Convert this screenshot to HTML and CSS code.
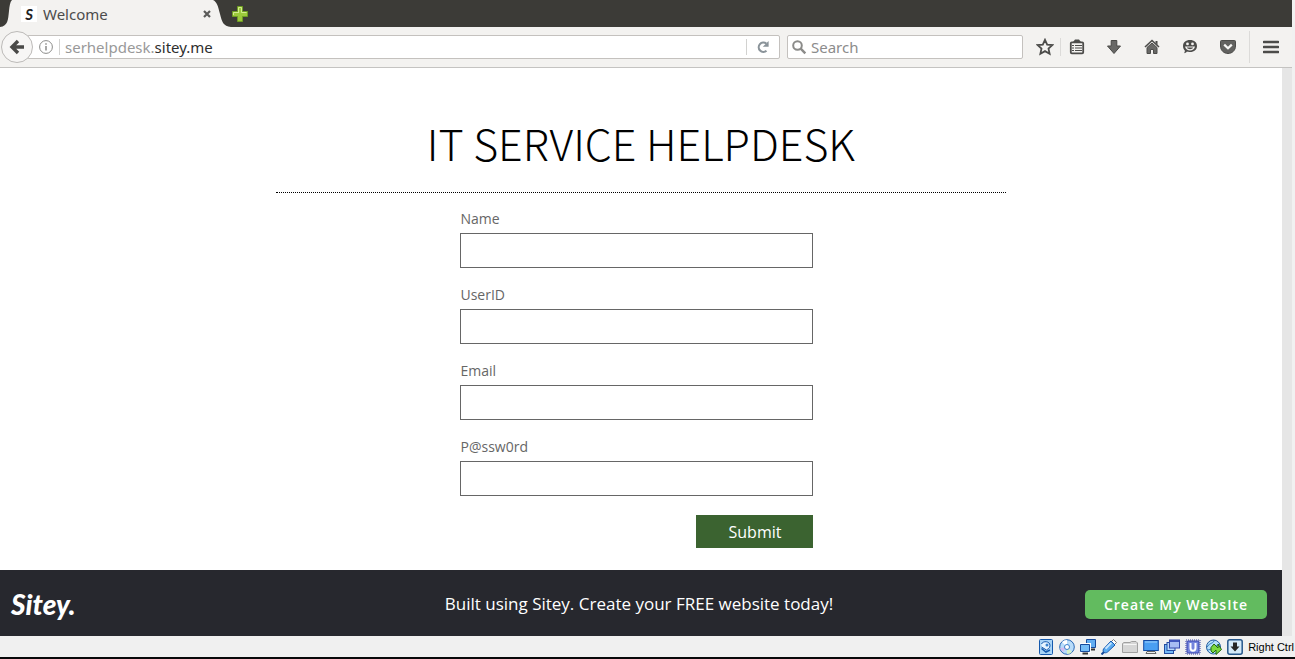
FILE: index.html
```html
<!DOCTYPE html>
<html lang="en">
<head>
<meta charset="utf-8">
<title>Welcome</title>
<link rel="stylesheet" href="styles.css">
</head>
<body>
<div class="window">
  <div class="tabs">
    <svg class="curve" width="12" height="27" viewBox="0 0 12 27"><path d="M0 27C8 26 8 20 9 11C9.500 6 10 2 12 0V27Z" fill="#f3f2f0"/></svg>
    <div class="tab">
      <span class="favicon">S</span>
      <span class="tab-title">Welcome</span>
      <button class="plain" aria-label="Close tab"><svg width="10" height="10" viewBox="0 0 10 10"><path d="M2 2L8 8M8 2L2 8" stroke="#5b5b59" stroke-width="2.200"/></svg></button>
    </div>
    <svg class="curve" width="18" height="27" viewBox="0 0 18 27"><path d="M0 0C4 2 5 6 7 14C9 22 10 26 18 27H0Z" fill="#f3f2f0"/></svg>
    <button class="plain new-tab" aria-label="New tab"><svg width="16" height="16" viewBox="0 0 16 16"><path d="M5.500 .5H10.500V5.500H15.500V10.500H10.500V15.500H5.500V10.500H.5V5.500H5.500Z" fill="#9cc93c" stroke="#6f9d22"/><path d="M6.500 7V1.500H9.500V6.500H14.500M1.500 9V6.500H6.500" fill="none" stroke="#d3ec8f"/></svg></button>
  </div>

  <div class="toolbar">
    <button class="plain back" aria-label="Back"><svg width="16" height="16" viewBox="0 0 16 16"><path d="M9 2L3 8L9 14M3.500 8H15" fill="none" stroke="#4a4a48" stroke-width="3.400"/></svg></button>
    <div class="address">
      <svg width="14" height="14" viewBox="0 0 14 14"><circle cx="7" cy="7" r="6.400" fill="none" stroke="#8c8c8a"/><path d="M7 6V10.500M7 3.200V4.800" stroke="#8c8c8a" stroke-width="1.500"/></svg>
      <span class="rule"></span>
      <span class="url">serhelpdesk.<b>sitey.me</b></span>
      <span class="rule"></span>
      <button class="plain reload" aria-label="Reload"><svg width="14" height="14" viewBox="0 0 14 14"><path d="M10.500 10.800A4.700 4.700 0 1 1 10.300 3.500" fill="none" stroke="#8a9399" stroke-width="2.100"/><path d="M12.600 1V6.800H6.800Z" fill="#8a9399"/></svg></button>
    </div>
    <label class="search">
      <svg width="15" height="15" viewBox="0 0 15 15"><circle cx="5.500" cy="5.500" r="4.300" fill="none" stroke="#8b8b89" stroke-width="2"/><path d="M8.700 8.700L13.300 13.300" stroke="#8b8b89" stroke-width="2.400"/></svg>
      <input type="text" placeholder="Search" aria-label="Search">
    </label>
    <div class="tools">
      <button class="plain" aria-label="Bookmark"><svg width="18" height="18" viewBox="0 0 18 18"><path d="M9 1.800L11.200 6.600L16.300 7.100L12.500 10.600L13.600 15.800L9 13.100L4.400 15.800L5.500 10.600L1.700 7.100L6.800 6.600Z" fill="none" stroke="#4c4c4a" stroke-width="1.800"/></svg></button>
      <button class="plain" aria-label="Bookmarks list"><svg width="16" height="16" viewBox="0 0 16 16"><path d="M4 3L6 .5H10L12 3Z" fill="#4c4c4a"/><rect x="1.800" y="3.300" width="12.400" height="11" rx="1" fill="none" stroke="#4c4c4a" stroke-width="1.800"/><path d="M3 6.500H5M6 6.500H13M3 9H5M6 9H13M3 11.500H5M6 11.500H13" stroke="#4c4c4a" stroke-width="1.200"/></svg></button>
      <button class="plain" aria-label="Downloads"><svg width="16" height="16" viewBox="0 0 16 16"><path d="M5.200 1.500H10.800V7H14.500L8 14.500L1.500 7H5.200Z" fill="#686866" stroke="#484846"/></svg></button>
      <button class="plain" aria-label="Home"><svg width="16" height="16" viewBox="0 0 16 16"><path d="M1 8L8 1.500L15 8" fill="none" stroke="#4c4c4a" stroke-width="1.600"/><path d="M11.500 2H13.500V6L11.500 4Z" fill="#4c4c4a"/><path d="M3 8.500L8 4L13 8.500V14.500H9.500V10.500H6.500V14.500H3Z" fill="#686866" stroke="#4c4c4a"/></svg></button>
      <button class="plain" aria-label="Hello chat"><svg width="16" height="16" viewBox="0 0 16 16"><path d="M8 1C12.300 1 15 3.500 15 7S12.300 13 8 13C6.500 13 5.800 12.900 5 12.600C4.200 13.600 3.200 14.200 2 14.300C2.700 13.200 2.900 12.400 2.800 11.400C1.600 10.200 1 8.700 1 7C1 3.500 3.700 1 8 1Z" fill="#4c4c4a"/><circle cx="5.500" cy="4.900" r="1.400" fill="#f3f2f0"/><circle cx="10.500" cy="4.900" r="1.400" fill="#f3f2f0"/><path d="M3 7.500H13C12.500 10.200 10.300 11.500 8 11.500S3.500 10.200 3 7.500Z" fill="#f3f2f0"/><path d="M4.800 8.600H11.200C10.700 9.900 9.200 10.300 8 10.300S5.300 9.900 4.800 8.600Z" fill="#4c4c4a"/></svg></button>
      <button class="plain" aria-label="Pocket"><svg width="16" height="16" viewBox="0 0 16 16"><path d="M1.500 1.500H14.500Q15.500 1.500 15.500 2.500V7C15.500 11.500 12 14.500 8 14.500S.5 11.500 .5 7V2.500Q.5 1.500 1.500 1.500Z" fill="#626260" stroke="#4c4c4a"/><path d="M4.200 5.600L8 9.300L11.800 5.600" fill="none" stroke="#f7f7f5" stroke-width="2.200"/></svg></button>
      <button class="plain" aria-label="Menu"><svg width="16" height="14" viewBox="0 0 16 14"><path d="M1 2H15M1 7H15M1 12H15" stroke="#4c4c4a" stroke-width="2.600" stroke-linecap="round"/></svg></button>
    </div>
  </div>

  <div class="viewport">
    <div class="page">
      <main class="content">
        <h1>IT SERVICE HELPDESK</h1>
        <form class="form">
          <label for="name">Name</label>
          <input id="name" type="text">
          <label for="userid">UserID</label>
          <input id="userid" type="text">
          <label for="email">Email</label>
          <input id="email" type="text">
          <label for="pass">P@ssw0rd</label>
          <input id="pass" type="text">
          <button type="button" class="submit">Submit</button>
        </form>
      </main>
      <footer class="promo">
        <a class="logo" href="#">Sitey.</a>
        <p>Built using Sitey. Create your FREE website today!</p>
        <a class="create" href="#">Create My WebsIte</a>
      </footer>
    </div>
    <div class="scroll"></div>
  </div>

  <div class="status">
    <svg width="16" height="16" viewBox="0 0 16 16"><rect x="1.500" y=".5" width="13" height="15" rx="1" fill="#a9d4f7" stroke="#1458ac"/><path d="M3.500 5C5 1.500 12 2 12 6.500C12 9.500 9.500 10 8.500 11L3.500 8" fill="#e8f5ff" stroke="#1458ac"/><circle cx="9" cy="6" r="1.500" fill="#3a83cf"/><path d="M3.500 9.500L8 13L12 11" fill="none" stroke="#1458ac" stroke-width="1.500"/></svg>
    <svg width="16" height="16" viewBox="0 0 16 16"><circle cx="8" cy="8" r="7.300" fill="#b8dcfa" stroke="#2867b5"/><path d="M8 8L3 3A7 7 0 0 1 8 1Z" fill="#fff"/><path d="M8 8L13 13A7 7 0 0 1 8 15Z" fill="#d8f3c8"/><path d="M8 8L1 9A7 7 0 0 0 4 13Z" fill="#d2bdf0"/><circle cx="8" cy="8" r="2.500" fill="#fff" stroke="#3c80cb"/></svg>
    <svg width="16" height="16" viewBox="0 0 16 16"><path d="M6.500 .5H15.500V8.500H6.500Z" fill="#62adf1" stroke="#174a9b"/><path d="M10 10.500H15" stroke="#333" stroke-width="2"/><path d="M.5 5.500H9.500V12.500H.5Z" fill="#75bcf6" stroke="#fff" stroke-width="3"/><path d="M.5 5.500H9.500V12.500H.5Z" fill="#75bcf6" stroke="#174a9b"/><path d="M2.500 14.500H8" stroke="#333" stroke-width="2"/></svg>
    <svg width="16" height="16" viewBox="0 0 16 16"><path d="M10.500 2.500L12.500 .5L15.500 3.500L13.500 5.500Z" fill="#fff" stroke="#777"/><path d="M2.500 10L10 2L14 6L6.500 13C4 15 1 13 2.500 10Z" fill="#5aaaf0" stroke="#185ab0"/><path d="M4.500 9.800L10.300 3.900" stroke="#c3e4ff" stroke-width="2"/><path d="M3 13L.5 15.500" stroke="#174a9b" stroke-width="2"/></svg>
    <svg width="16" height="16" viewBox="0 0 16 16"><path d="M.5 13.500V4.500L2 3.500H8L9.500 2.500H14L15.500 4V13.500Z" fill="#d6d6d6" stroke="#a0a0a0"/><path d="M1.500 5.500H14.500" stroke="#f6f6f6"/></svg>
    <svg width="16" height="16" viewBox="0 0 16 16"><rect x=".7" y="1.500" width="14.600" height="10" fill="#4a9ff2" stroke="#124aa3"/><path d="M2 3H14" stroke="#9dd0fb"/><path d="M3 14.500L4 12.500H12L13 14.500Z" fill="#eee" stroke="#666"/></svg>
    <svg width="16" height="16" viewBox="0 0 16 16"><rect x=".5" y="5.500" width="9" height="9" fill="#74b9f6" stroke="#234ba0"/><rect x="3" y="3.500" width="8" height="8" fill="#b9d9fa" stroke="#234ba0"/><rect x="5.500" y="1" width="10" height="8" fill="#a7bdf3" stroke="#3449ad"/><path d="M6 2H15" stroke="#4057bd" stroke-width="2"/></svg>
    <svg width="16" height="16" viewBox="0 0 16 16"><rect x="1" y="1" width="14" height="14" fill="none" stroke="#3541a6" stroke-width="1" stroke-dasharray="1 1"/><rect x="2" y="2" width="12" height="12" rx="1" fill="#7585dd" stroke="#3945ae"/><path d="M5.500 4V9C5.500 12.500 10.500 12.500 10.500 9V4" fill="none" stroke="#fff" stroke-width="2"/></svg>
    <svg width="16" height="16" viewBox="0 0 16 16"><circle cx="7.500" cy="8" r="7" fill="#b5e0fa" stroke="#255c9d"/><path d="M1 8C4 3 8 5 8 1M1 11C5 11 8 8 14 5" fill="none" stroke="#2b72b8"/><path d="M5 8.500L8 5L12 9V5L15.500 10.500L10 15.500V11L7 14L5 12Z" fill="#7bd83e" stroke="#23680f"/></svg>
    <svg width="16" height="16" viewBox="0 0 16 16"><rect x=".8" y=".8" width="14.400" height="14.400" rx="2" fill="#d5eafa" stroke="#26578c" stroke-width="1.500"/><path d="M6 3.500H10V7.500H12.500L8 12.500L3.500 7.500H6Z" fill="#252525"/></svg>
    <span class="host-key">Right Ctrl</span>
  </div>
</div>
</body>
</html>
```
FILE: styles.css
```css
* { box-sizing: border-box; }
body { margin: 0; background: #f1f1f1; font-family: "Open Sans", sans-serif; }
.window { display: flex; flex-direction: column; min-height: 100vh; border-bottom: 2px solid #08080a; }
.plain { display: flex; align-items: center; justify-content: center; padding: 0; border: 0; background: none; }

.tabs { display: flex; height: 27px; margin-right: 3px; background: #3c3b37; }
.tab { display: flex; align-items: center; width: 201px; padding: 0 1px 0 9px; background: #f3f2f0; font: 15px/20px "Noto Sans", sans-serif; color: #4c4c4c; }
.tab-title { flex: 1; padding-left: 6px; }
.favicon { width: 16px; height: 16px; background: #fff; color: #222; font: italic 700 15px/16px Lato, sans-serif; text-align: center; }
.new-tab { margin-left: 1px; }

.toolbar { display: flex; align-items: center; height: 41px; margin-right: 3px; padding-left: 1px; background: #f3f2f0; border-bottom: 1px solid #c4c3c1; }
.back { position: relative; width: 32px; height: 32px; border: 1px solid #bcbab8; border-radius: 50%; background: #f7f6f5; }
.address, .search { display: flex; align-items: center; height: 24px; border: 1px solid #c4c1be; border-radius: 2px; background: #fff; font: 15px/20px "Noto Sans", sans-serif; }
.address { flex: 1; margin-left: -6px; padding-left: 11px; }
.rule { width: 1px; height: 16px; margin-left: 6px; background: #d2d2d0; }
.url { flex: 1; padding-left: 5px; color: #999; }
.url b { font-weight: 400; color: #2e2e2e; }
.reload { width: 32px; }
.search { width: 236px; margin-left: 7px; padding-left: 4px; gap: 4px; }
.search input { flex: 1; min-width: 0; padding: 0; border: 0; outline: 0; background: none; font: inherit; }
.search input::placeholder { color: #8c8c8c; opacity: 1; }
.tools { display: flex; align-items: center; width: 269px; padding-left: 11px; }
.tools button { width: 38px; height: 32px; }
.tools button:first-child { width: 27px; height: 18px; padding-right: 4px; border-right: 1px solid #dcdbd9; }
.tools button:nth-child(2) { width: 31px; }
.tools button:nth-child(3) { width: 44px; }
.tools button:nth-child(4) { width: 32px; }
.tools button:nth-child(5) { width: 44px; }
.tools button:nth-child(6) { width: 32px; }
.tools button:last-child { flex: 1; margin-left: 5px; border-left: 1px solid #dcdbd9; }

.viewport { display: flex; flex: 1; margin-right: 3px; }
.page { display: flex; flex: 1; flex-direction: column; background: #fff; }
.scroll { width: 10px; background: #e6e6e6; }
.content { flex: 1; width: 57%; margin: 0 auto; padding: 40px 0 22px; }
h1 { margin: 0 0 16px; padding-bottom: 16px; border-bottom: 1px dotted #000; color: #000; font: 300 43px/68px "Noto Sans CJK SC", "Open Sans", sans-serif; text-align: center; }
.form { display: flex; flex-direction: column; width: 361px; margin: 0 auto; padding-right: 8px; }
.form label { height: 24px; font-size: 14px; line-height: 20px; color: #666; }
.form input { height: 35px; margin-bottom: 17px; padding: 0 8px; border: 1px solid #666; background: #fff; font: inherit; }
.submit { align-self: flex-end; width: 117px; height: 33px; margin-top: 2px; padding: 0; border: 0; background: #3b6330; color: #fff; font: 16px/24px "Open Sans", sans-serif; }

.promo { display: grid; grid-template-columns: 1fr auto 1fr; align-items: center; height: 66px; padding: 2px 15px 0 11px; background: #27282e; color: #fff; }
.promo p { margin: 0; font-size: 17px; line-height: 24px; }
.promo a { color: #fff; text-decoration: none; }
.logo { font: italic 900 28px/36px Lato, sans-serif; }
.create { justify-self: end; width: 182px; border-radius: 5px; background: #62bb5f; font-size: 14px; font-weight: 600; line-height: 29px; letter-spacing: 1px; text-align: center; }

.status { display: flex; align-items: center; justify-content: flex-end; gap: 5px; height: 21px; padding-right: 1px; background: #f0f0f0; }
.host-key { white-space: nowrap; color: #000; font: 11px/16px "Liberation Sans", sans-serif; }
```
